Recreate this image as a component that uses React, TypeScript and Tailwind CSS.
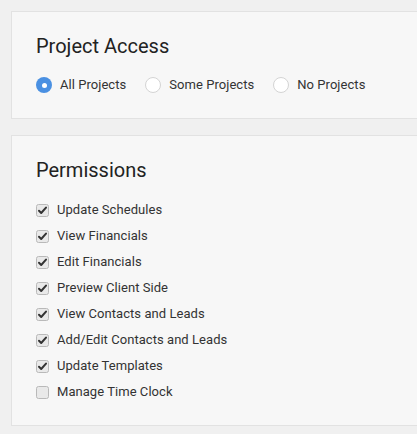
import React from 'react';

const font = { fontFamily: 'Roboto, "Liberation Sans", sans-serif' };

const permissions = [
  { label: 'Update Schedules', checked: true },
  { label: 'View Financials', checked: true },
  { label: 'Edit Financials', checked: true },
  { label: 'Preview Client Side', checked: true },
  { label: 'View Contacts and Leads', checked: true },
  { label: 'Add/Edit Contacts and Leads', checked: true },
  { label: 'Update Templates', checked: true },
  { label: 'Manage Time Clock', checked: false },
];

function Radio({ checked }: { checked: boolean }) {
  return checked ? (
    <span className="flex h-4 w-4 items-center justify-center rounded-full bg-[#4a90e2]">
      <span className="h-[5px] w-[5px] rounded-full bg-white" />
    </span>
  ) : (
    <span className="h-4 w-4 rounded-full border border-[#d4d4d4] bg-white" />
  );
}

function Checkbox({ checked }: { checked: boolean }) {
  return (
    <svg width="13" height="13" viewBox="0 0 13 13">
      <rect x="0.5" y="0.5" width="12" height="12" rx="2" fill="#e9e9e9" stroke="#b9b9b9" />
      {checked && (
        <path d="M3 6.8 L5.2 9 L10 3.6" fill="none" stroke="#333" strokeWidth="2" strokeLinecap="round" strokeLinejoin="round" />
      )}
    </svg>
  );
}

export default function App() {
  return (
    <div className="min-h-[434px] overflow-hidden bg-[#f0f0f0] pl-[11px] pt-[11px]" style={font}>
      {/* Project Access */}
      <div className="w-[420px] border border-[#e2e2e2] bg-[#f7f7f7] pl-6 pt-[22px] pb-[25px]">
        <h2 className="text-[20px] leading-6 text-[#222]">Project Access</h2>
        <div className="mt-[19px] flex items-center gap-[19px] text-[13px] tracking-[0.05px] text-[#333]">
          {['All Projects', 'Some Projects', 'No Projects'].map((p, i) => (
            <label key={p} className="flex items-center gap-2">
              <Radio checked={i === 0} />
              <span className="leading-4">{p}</span>
            </label>
          ))}
        </div>
      </div>

      {/* Permissions */}
      <div className="mt-4 w-[420px] border border-[#e2e2e2] bg-[#f7f7f7] pl-6 pt-[22px] pb-5">
        <h2 className="text-[20px] leading-6 text-[#222]">Permissions</h2>
        <div className="mt-[15px] flex flex-col text-[13px] tracking-[0.05px] text-[#333]">
          {permissions.map((p) => (
            <label key={p.label} className="flex h-[26px] items-center gap-2">
              <Checkbox checked={p.checked} />
              <span>{p.label}</span>
            </label>
          ))}
        </div>
      </div>
    </div>
  );
}
